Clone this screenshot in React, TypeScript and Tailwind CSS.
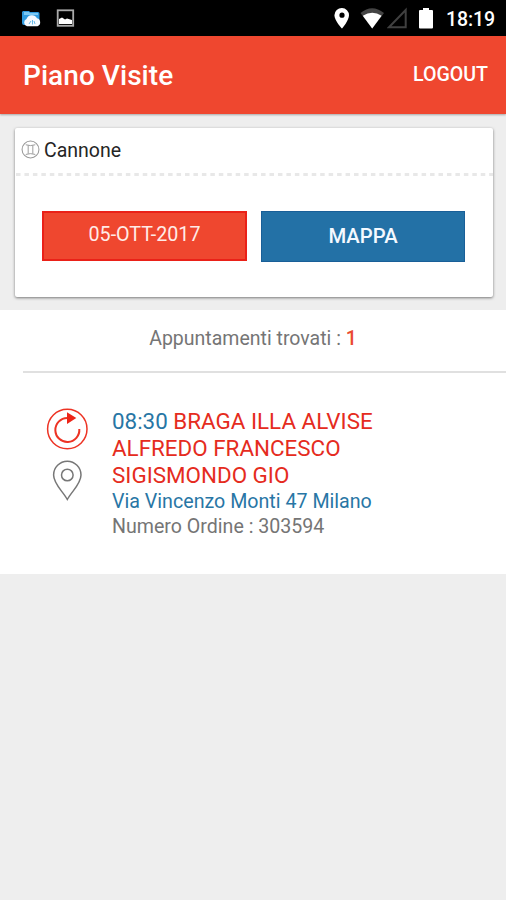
function StatusBar() {
  return (
    <div className="flex h-9 items-center bg-black text-white">
      <svg className="ml-[21px] h-9 w-5" viewBox="0 0 20 36">
        <path d="M2 11h6l1 1h8a1.500 1.500 0 0 1 1.500 1.500V25H3a2 2 0 0 1-2-2V12z" fill="#2f9be0" />
        <path d="M3 12h5l1 1h8v2H3z" fill="#7cc8f3" />
        <path d="M6 26.200a3.800 3.800 0 0 1-.5-7.200 5.800 5.800 0 0 1 10.500-.8A4.200 4.200 0 0 1 16.500 26.200z" fill="#f4faff" />
        <path d="m8 24 2-3M11.500 24.500V20M14 24l-1-3" stroke="#65b8e8" strokeWidth="1" fill="none" />
      </svg>
      <svg className="ml-[15px] h-9 w-5" viewBox="0 0 20 36">
        <rect x="1.700" y="10.300" width="15.500" height="15.500" fill="none" stroke="#aaa" strokeWidth="1.800" />
        <path d="M3 24v-5l3-1.500 3 2 2-1 5 1.500v4z" fill="#fff" />
      </svg>
      <svg className="ml-[257px] h-9 w-4" viewBox="0 0 16 36">
        <path fillRule="evenodd" d="M9 8A7.400 7.400 0 0 0 1.400 15.200C1.400 20.500 9 28.500 9 28.500S16 20.500 16 15.200A7.200 7.200 0 0 0 9 8m0 4.600a2.600 2.600 0 1 1 0 5.200 2.600 2.600 0 0 1 0-5.200" fill="#fff" />
      </svg>
      <svg className="ml-[11px] h-9 w-6" viewBox="0 0 24 36">
        <path d="M.5 13q11.500-9.500 23.500 0L12.200 28.500z" fill="#444" />
        <path d="M2.800 15.800q9.500-6 18.800 0L12.200 28.500z" fill="#fff" />
      </svg>
      <svg className="ml-[3px] h-9 w-5" viewBox="0 0 20 36">
        <path d="M2 27.200 18.700 10v17.200z" fill="none" stroke="#404040" strokeWidth="2" />
      </svg>
      <svg className="ml-3 h-9 w-[15px]" viewBox="0 0 15 36">
        <path d="M4 8h6v2h3q1 0 1 1v16.500q0 1-1 1H1q-1 0-1-1V11q0-1 1-1h3z" fill="#fff" />
      </svg>
      <span className="ml-3 pt-[3px] text-[19.500px] leading-6 font-medium tracking-[-0.100px]">18:19</span>
    </div>
  );
}

function Header() {
  return (
    <header className="relative flex h-[78px] items-center justify-between bg-[#ef472f] pr-[18px] pl-[23px] font-medium text-white shadow-[0_1px_2px_rgba(0,0,0,0.3)]">
      <h1 className="pt-px text-[28px] leading-8 tracking-[0.050px]">Piano Visite</h1>
      <button className="text-[19.600px] leading-6">LOGOUT</button>
    </header>
  );
}

function VisitCard() {
  return (
    <section className="h-[196px] pt-[14px] pr-[13px] pl-[15px]">
      <div className="h-[169px] rounded-[2px] bg-white shadow-[0_1px_3px_rgba(0,0,0,0.5)]">
        <div className="flex h-[45px] items-center pl-[6px] text-[#252525]">
          <svg className="mb-[2px] h-[19px] w-[19px]" viewBox="0 0 18 18" fill="none" stroke="#999">
            <circle cx="9" cy="9" r="8" strokeWidth="1" />
            <path d="M4.500 4.500q4.500 1.600 9 0M4.500 13.700q4.500-1.600 9 0M6.800 5v8M11.200 5v8" strokeWidth="0.900" />
          </svg>
          <span className="ml-[4px] text-[19.500px] leading-6">Cannone</span>
        </div>
        <svg className="block h-[3px] w-full">
          <line x1="1" y1="1.500" x2="478" y2="1.500" stroke="#e8e8e8" strokeWidth="3" strokeDasharray="4.500 3.950" />
        </svg>
        <div className="flex gap-[14px] px-[27px] pt-[35px]">
          <button className="h-[50px] w-[205px] border-2 border-[#ea2118] bg-[#ef472f] pb-[2px] text-[19.700px] text-[#ffebe7]">05-OTT-2017</button>
          <button className="h-[51px] w-[204px] border border-[#195f98] bg-[#2371a6] text-[20.300px] font-medium text-[#f4f9ff]">MAPPA</button>
        </div>
      </div>
    </section>
  );
}

function Appointments() {
  return (
    <main className="h-[264px] bg-white">
      <p className="h-[61px] pt-[17px] text-center text-[19.500px] leading-6 text-[#757575]">
        Appuntamenti trovati : <span className="font-medium text-[#ea4930]">1</span>
      </p>
      <div className="ml-[23px] border-t-2 border-[#e0e0e0]" />
      <div className="flex pt-[35px] pl-[46px]">
        <div className="flex w-[66px] flex-col">
          <svg className="h-[42px] w-[42px]" viewBox="0 0 42 42" fill="none" stroke="#ed3324">
            <circle cx="21.300" cy="21" r="19.700" strokeWidth="1.500" />
            <path d="M33.300 21A12 12 0 1 1 21.300 10" strokeWidth="2" />
            <path d="M21 4.300 30.300 10 21 16z" fill="#ed2518" stroke="none" />
          </svg>
          <svg className="mt-[10px] h-[42px] w-[42px]" viewBox="0 0 42 42" fill="none" stroke="#777" strokeWidth="1.500">
            <path d="M21.300 39.500C17 31.500 7.600 24 7.600 15a13.700 13.700 0 0 1 27.400 0C35 24 25.600 31.500 21.300 39.500z" />
            <circle cx="21.300" cy="15" r="5.800" />
          </svg>
        </div>
        <div className="whitespace-nowrap text-[#757575]">
          <h2 className="text-[22.400px] leading-[27px] text-[#e52b20]">
            <span className="text-[#2876a5]">08:30</span> BRAGA ILLA ALVISE<br />ALFREDO FRANCESCO<br />SIGISMONDO GIO
          </h2>
          <p className="text-[19.650px] leading-[25px] text-[#2876a5]">Via Vincenzo Monti 47 Milano</p>
          <p className="text-[19.600px] leading-[25px]">Numero Ordine : 303594</p>
        </div>
      </div>
    </main>
  );
}

export default function App() {
  return (
    <div className="h-[900px] w-[506px] overflow-hidden bg-[#eeeeee] font-[Roboto,sans-serif]">
      <StatusBar />
      <Header />
      <VisitCard />
      <Appointments />
    </div>
  );
}
